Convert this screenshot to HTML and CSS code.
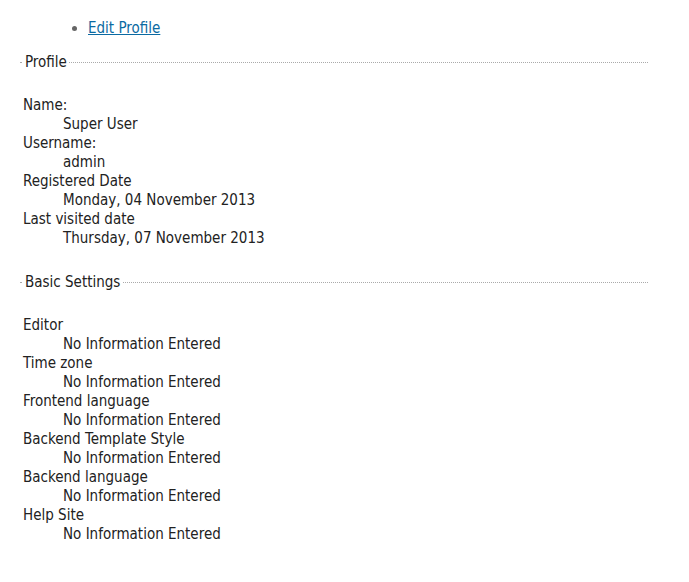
FILE: index.html
```html
<!DOCTYPE html>
<html lang="en">
  <head>
    <meta charset="UTF-8" />
    <title>Profile</title>
    <link rel="stylesheet" href="styles.css">
  </head>
  <body>
    <ul class="btn-toolbar">
      <li><a href="#">Edit Profile</a></li>
    </ul>

    <fieldset class="profile-core">
      <legend>Profile</legend>
      <dl>
        <dt>Name:</dt>
        <dd>Super User</dd>
        <dt>Username:</dt>
        <dd>admin</dd>
        <dt>Registered Date</dt>
        <dd>Monday, 04 November 2013</dd>
        <dt>Last visited date</dt>
        <dd>Thursday, 07 November 2013</dd>
      </dl>
    </fieldset>

    <fieldset class="profile-params">
      <legend>Basic Settings</legend>
      <dl>
        <dt>Editor</dt>
        <dd>No Information Entered</dd>
        <dt>Time zone</dt>
        <dd>No Information Entered</dd>
        <dt>Frontend language</dt>
        <dd>No Information Entered</dd>
        <dt>Backend Template Style</dt>
        <dd>No Information Entered</dd>
        <dt>Backend language</dt>
        <dd>No Information Entered</dd>
        <dt>Help Site</dt>
        <dd>No Information Entered</dd>
      </dl>
    </fieldset>
  </body>
</html>
```

FILE: styles.css
```css
body {
  font-family: "DejaVu Sans Condensed", "DejaVu Sans", sans-serif;
  font-size: 15px;
  line-height: 19px;
  color: #222;
  margin: 0;
  padding: 19px 41px 0 20px;
  background: #fff;
}
.btn-toolbar {
  margin: 0 0 15px;
  padding: 0 0 0 68px;
  color: #666;
}
.btn-toolbar a {
  color: #0b6aa2;
  text-decoration: underline;
}
fieldset {
  margin: 0 0 25px;
  padding: 0 0 0 3px;
  border: none;
  border-top: 1px dotted #aaa;
  min-width: 0;
}
legend {
  padding: 0 2px;
}
dl {
  margin: 24px 0 0;
}
dt {
  margin: 0;
}
dd {
  margin: 0 0 0 40px;
}
```
